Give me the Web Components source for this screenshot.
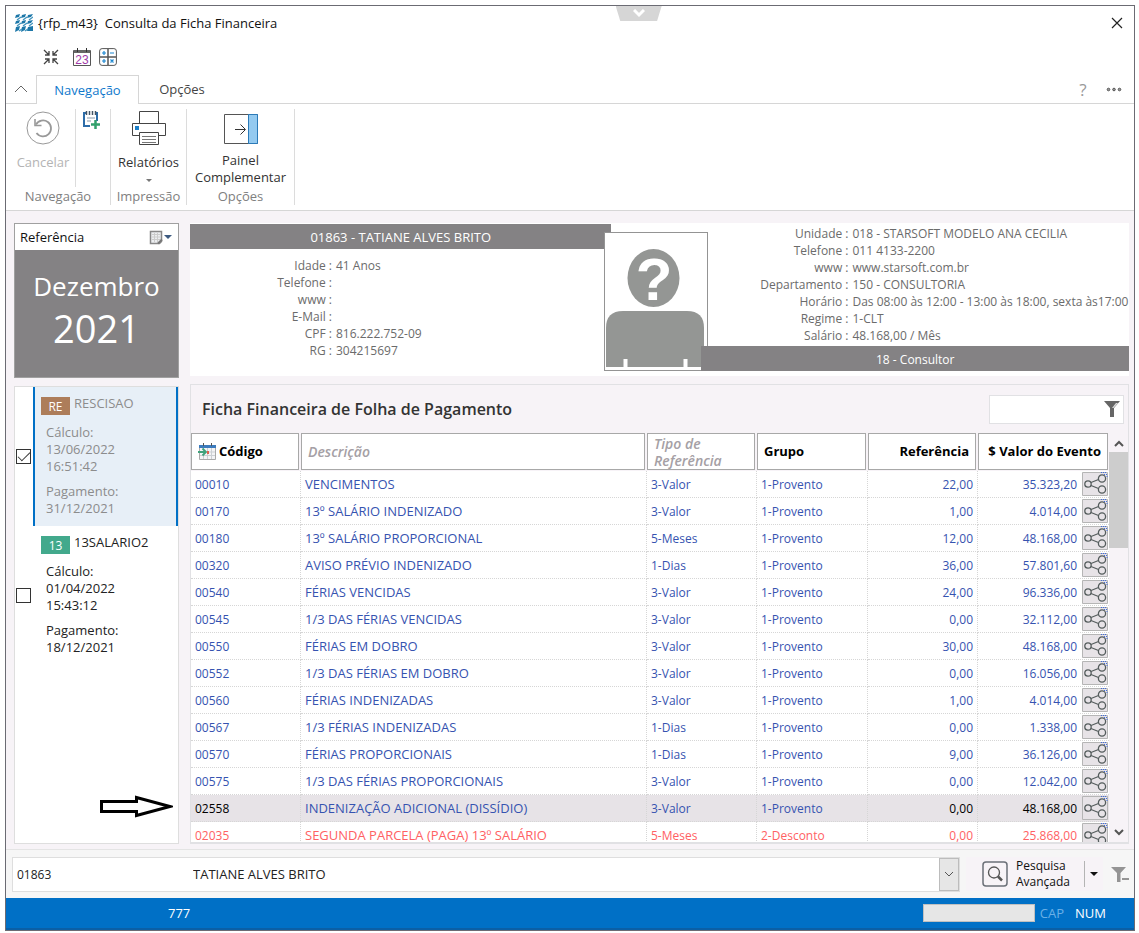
<!DOCTYPE html>
<html lang="pt-BR">
<head>
<meta charset="utf-8">
<title>{rfp_m43} Consulta da Ficha Financeira</title>
<style>
  html, body {
    height: 100%;
  }

  body {
    margin: 0;
    padding: 5px 4px 2px 5px;
    box-sizing: border-box;
    background: #fff;
    font: 13px/17px "Open Sans", "Noto Sans", sans-serif;
    color: #222;
  }
</style>
</head>
<body>
<ficha-window>
  <title-bar slot="top">{rfp_m43}&nbsp; Consulta da Ficha Financeira</title-bar>
  <quick-bar slot="top"></quick-bar>
  <ribbon-tabs slot="top"></ribbon-tabs>
  <ribbon-bar slot="top"></ribbon-bar>
  <reference-card slot="side" month="Dezembro" year="2021">Referência</reference-card>
  <calc-list slot="side">
    <calc-item code="RE" color="#ad7d5a" name="RESCISAO" date="13/06/2022" time="16:51:42" payment="31/12/2021" selected></calc-item>
    <calc-item code="13" color="#42a98c" name="13SALARIO2" date="01/04/2022" time="15:43:12" payment="18/12/2021"></calc-item>
  </calc-list>
  <person-panel></person-panel>
  <event-grid></event-grid>
  <search-footer slot="bottom"></search-footer>
  <status-bar slot="bottom">777</status-bar>
</ficha-window>

<script>
const icons = {
  logo: [18, 18, `<g fill="#1c77a8"><path d="M1 1l4-1-1 3-4 1zM7 1l4-1-1 3-4 1zM13 1l5-1-2 3-4 1zM1 7l4-1-1 3-4 1zM7 7l4-1-1 3-4 1zM13 7l5-1-2 3-4 1zM1 13l4-1-1 4-4 2zM7 13l4-1-1 4-4 2zM13 13l5-1v5h-6z"/></g><path d="M2 6l4-3M8 6l4-3M14 6l4-3M2 12l4-3M8 12l4-3M14 12l4-3M4 17l3-2M10 17l3-2" stroke="#3f93bd" stroke-width="1.300"/>`],
  close: [12, 12, `<path d="M1 1l10 10M11 1L1 11" stroke="#222" fill="none" stroke-width="1.2"/>`],
  collapse: [16, 16, `<g stroke="#444" stroke-width="1.3" fill="none"><path d="M1 1l5 5M6 2v4H2M15 1l-5 5M10 2v4h4M1 15l5-5M2 10h4v4M15 15l-5-5M14 10h-4v4"/></g>`],
  calendar: [18, 18, `<path d="M.5 2.500h17v15H.5z" fill="#fff" stroke="#555"/><path d="M1 2h16v3H1z" fill="#666"/><path d="M4.500 0v4M13.500 0v4" stroke="#333"/><text x="9" y="15.500" text-anchor="middle" font-family="Liberation Sans, sans-serif" font-size="12" fill="#a03aa8">23</text>`],
  calculator: [18, 18, `<rect x=".6" y=".6" width="16.800" height="16.800" rx="2.500" fill="#fff" stroke="#555"/><path d="M9 1v16M1 9h16" stroke="#555" stroke-width="1.500"/><path d="M3 5h4M5 3v4M11 5h4M3 13h4M5 11v4M11.500 11.500l3 3M14.500 11.500l-3 3" stroke="#1a86d0" stroke-width="1.200"/>`],
  chevronUp: [14, 8, `<path d="M1 7l6-6 6 6" fill="none" stroke="#666"/>`],
  dots: [16, 5, `<g fill="#999" stroke="#555"><circle cx="2.500" cy="2.500" r="1.300"/><circle cx="8" cy="2.500" r="1.300"/><circle cx="13.500" cy="2.500" r="1.300"/></g>`],
  undo: [34, 34, `<g fill="none" stroke="#999"><circle cx="17" cy="17" r="16"/><path d="M10 13.500a8 8 0 1 1 .500 8.500" stroke-width="1.800"/><path d="M9 8v6.500h6.500" stroke-width="1.600"/></g>`],
  addNote: [18, 18, `<path d="M4 2H2v13h6M15 1v9" fill="none" stroke="#2d6ca8" stroke-width="2"/><path d="M4.500 0v4M7.500 0v4M10.500 0v4M13.500 0v4" stroke="#456" stroke-width="1.500"/><path d="M5 7h8M5 10h4" stroke="#89a"/><path d="M13.500 9v9M9 13.500h9" stroke="#32a06c" stroke-width="2.500"/>`],
  printer: [34, 34, `<g fill="#fff" stroke="#444"><path d="M7.500.5h19v13h-19z"/><path d="M.5 12.500h33v12H.5z"/><path d="M7.500 21.500h19v12h-19z"/><path d="M10 25.500h14M10 28.500h14M10 31.500h14" stroke="#777"/></g><path d="M3 15h4v4H3z" fill="#1a7fc8"/>`],
  panel: [34, 30, `<path d="M.5.5h33v29H.5z" fill="#fff" stroke="#555"/><path d="M24.500.5h9v29h-9z" fill="#94caf0" stroke="#2b7ab8"/><path d="M11 15.500h10M16.500 10.500l5 5-5 5" fill="none" stroke="#333"/>`],
  note: [14, 15, `<path d="M1.500 1.500h11v10l-2 2h-9z" fill="#eceef0" stroke="#888" stroke-width="1.500"/><path d="M3 4.500h8M3 7h8M3 9.500h8M5.500 3v9M8.500 3v9" stroke="#ccc"/><path d="M9 13.500l4-4" stroke="#777" stroke-width="2"/>`],
  avatar: [102, 137, `<g fill="#949694"><ellipse cx="48.500" cy="45" rx="26" ry="29"/><path d="M1 134V95q0-17 17-17h64q17 0 17 17v39z"/></g><path d="M20.500 126v8M80.500 126v8" stroke="#fff" stroke-width="4"/><text x="49" y="67" text-anchor="middle" font-family="Liberation Sans, sans-serif" font-weight="bold" font-size="60" fill="#fff">?</text>`],
  funnel: [18, 18, `<path d="M1 1h16l-6 7v9H7V8z" fill="#666"/><path d="M10.500 8l4.500-5h-2l-4 5" fill="#ddd"/>`],
  sheet: [18, 17, `<path d="M1.500 2.500h16v14h-16z" fill="#f4f4f6" stroke="#aaa"/><path d="M1 2h17v3H1z" fill="#3c7bbd"/><path d="M5.500 5v11M9.500 5v11M13.500 5v11M2 9h15M2 12.500h15" stroke="#ccd0d4"/><path d="M0 9h7M4.500 5.500L8 9l-3.500 3.500" fill="none" stroke="#3fa27c" stroke-width="1.800"/><path d="M9 8h2v3H9z" fill="#e06050"/><path d="M5.500 0v3M13.500 0v3" stroke="#555"/>`],
  share: [26, 24, `<path d="M.5.500h25v23H.5z" fill="#e7e3e7" stroke="#b5b5b5"/><g fill="none" stroke="#555d5d" stroke-width="1.300"><circle cx="6" cy="12" r="3.200"/><circle cx="20" cy="6.500" r="3.600"/><circle cx="20" cy="17.500" r="3.600"/><path d="M9 10.500l7.500-3M9 13.500l7.500 3"/></g><path d="M19 .5h6M22 2.500h3M24.500 4.500h1" stroke="#3d6be0" stroke-dasharray="1 1"/>`],
  up: [10, 7, `<path d="M1 6l4-4 4 4" fill="none" stroke="#555" stroke-width="2"/>`],
  down: [10, 7, `<path d="M1 1l4 4 4-4" fill="none" stroke="#555" stroke-width="2"/>`],
  thinDown: [10, 6, `<path d="M1 1l4 4 4-4" fill="none" stroke="#555"/>`],
  whiteDown: [12, 9, `<path d="M1 1l5 5 5-5" fill="none" stroke="#fff" stroke-width="3"/>`],
  search: [26, 26, `<rect x="1" y="1" width="24" height="24" rx="3" fill="none" stroke="#6b7078" stroke-width="1.500"/><circle cx="12" cy="11.500" r="5.500" fill="none" stroke="#555" stroke-width="1.300"/><path d="M16 15.500l4 4" stroke="#555" stroke-width="2.500"/>`],
  clearFilter: [19, 16, `<path d="M1 1h15l-5.500 6v9H7V7z" fill="#949494"/><path d="M12 13h7" stroke="#949494" stroke-width="2"/>`],
  caret: [8, 4, `<path d="M0 0h8L4 4z" fill="currentColor"/>`],
  smallCaret: [6, 3, `<path d="M0 0h6L3 3z" fill="currentColor"/>`],
  arrow: [74, 24, `<path d="M2.500 6.500h35v-4L71 11.500l-33.500 9v-4h-35z" fill="#fff" stroke="#000" stroke-width="3"/>`]
};

class UiIcon extends HTMLElement {
  constructor() {
    super();
    this.attachShadow({mode: 'open'});
  }

  connectedCallback() {
    const [w, h, body] = icons[this.getAttribute('name')];
    this.shadowRoot.innerHTML = `
      <style>
        :host { display: inline-block; flex: none; width: ${w}px; height: ${h}px; }
        svg { display: block; }
      </style>
      <svg width="${w}" height="${h}" viewBox="0 0 ${w} ${h}" aria-hidden="true">${body}</svg>`;
  }
}

customElements.define('ui-icon', UiIcon);

const base = `
  *, :host { box-sizing: border-box; }
  button, input, select { font: inherit; color: inherit; margin: 0; padding: 0; border: 0; background: none; border-radius: 0; }
`;

// Registers an element whose shadow root is built from a style and a markup function
function define(name, style, markup) {
  customElements.define(name, class extends HTMLElement {
    constructor() {
      super();
      this.attachShadow({mode: 'open'});
    }

    connectedCallback() {
      this.shadowRoot.innerHTML = `<style>${base}${style}</style>${markup(this)}`;
    }
  });
}

define('ficha-window', `
  :host {
    display: flex;
    flex-direction: column;
    height: 100%;
    border: 1px solid #6b6b73;
    background: #fff;
  }
  main {
    flex: 1;
    min-height: 0;
    display: grid;
    grid-template-columns: 165px minmax(0, 1fr);
    gap: 11px;
    padding: 12px 5px 5px 8px;
    background: #f7f3f7;
    border-top: 1px solid #d6d6d6;
  }
  aside, section {
    display: flex;
    flex-direction: column;
    gap: 8px;
    min-width: 0;
    min-height: 0;
  }
`, () => `
  <slot name="top"></slot>
  <main>
    <aside><slot name="side"></slot></aside>
    <section><slot></slot></section>
  </main>
  <slot name="bottom"></slot>
`);

define('title-bar', `
  :host {
    display: flex;
    align-items: center;
    gap: 5px;
    height: 34px;
    padding: 0 11px 0 9px;
    position: relative;
  }
  h1 { flex: 1; margin: 0; font: inherit; color: #111; }
  .pull {
    position: absolute;
    top: 0;
    left: 56%;
    width: 46px;
    height: 15px;
    margin-left: -22px;
    background: #d6d6d6;
    clip-path: polygon(0 0, 100% 0, 90% 100%, 10% 100%);
  }
  button { display: flex; align-items: center; justify-content: center; }
`, () => `
  <ui-icon name="logo"></ui-icon>
  <h1><slot></slot></h1>
  <button class="pull" aria-label="Expandir"><ui-icon name="whiteDown"></ui-icon></button>
  <button aria-label="Fechar"><ui-icon name="close"></ui-icon></button>
`);

define('quick-bar', `
  :host { display: flex; align-items: center; gap: 8px; height: 35px; padding: 0 37px 2px; }
  button { display: flex; }
  .fold { margin-right: 6px; }
`, () => `
  <button class="fold" aria-label="Recolher"><ui-icon name="collapse"></ui-icon></button>
  <button aria-label="Calendário"><ui-icon name="calendar"></ui-icon></button>
  <button aria-label="Calculadora"><ui-icon name="calculator"></ui-icon></button>
`);

define('ribbon-tabs', `
  :host {
    display: flex;
    align-items: stretch;
    height: 29px;
    padding-right: 12px;
    border-bottom: 1px solid #d6d6d6;
  }
  button { display: flex; align-items: center; justify-content: center; }
  .fold { width: 30px; }
  .tab { width: 86px; color: #444; }
  .active {
    width: 103px;
    margin-bottom: -1px;
    border: 1px solid #d6d6d6;
    border-bottom: 0;
    background: #fff;
    color: #0f78cc;
  }
  .help { margin: 0 9px 0 auto; width: 28px; font-size: 17px; color: #999; }
`, () => `
  <button class="fold" aria-label="Ocultar faixa"><ui-icon name="chevronUp"></ui-icon></button>
  <button class="tab active">Navegação</button>
  <button class="tab">Opções</button>
  <button class="help">?</button>
  <button aria-label="Mais"><ui-icon name="dots"></ui-icon></button>
`);

define('ribbon-group', `
  :host {
    display: flex;
    flex-direction: column;
    height: 96px;
    border-right: 1px solid #dcdcdc;
  }
  .items { flex: 1; display: flex; justify-content: center; align-items: flex-start; }
  .label { line-height: 18px; text-align: center; color: #808080; }
`, el => `
  <div class="items"><slot></slot></div>
  <div class="label">${el.getAttribute('label')}</div>
`);

define('ribbon-bar', `
  :host { display: flex; padding: 5px 0; }
  ribbon-group:nth-of-type(1) { width: 105px; }
  ribbon-group:nth-of-type(2) { width: 76px; }
  ribbon-group:nth-of-type(3) { width: 108px; }
  button {
    display: flex;
    flex-direction: column;
    align-items: center;
    padding-top: 2px;
    line-height: 17px;
    color: #333;
  }
  .large ui-icon { margin-bottom: 9px; }
  .wide { width: 70px; height: 78px; padding-left: 5px; border-right: 1px solid #dcdcdc; }
  .small { width: 34px; padding: 2px 5px 0 0; }
  .off { color: #b4b4b4; }
  .large .more { margin: 8px 0 0; color: #777; }
  .panel { padding-top: 5px; }
  .panel ui-icon { margin-bottom: 8px; }
`, () => `
  <ribbon-group label="Navegação">
    <button class="large wide off"><ui-icon name="undo"></ui-icon>Cancelar</button>
    <button class="small" aria-label="Adicionar anotação"><ui-icon name="addNote"></ui-icon></button>
  </ribbon-group>
  <ribbon-group label="Impressão">
    <button class="large"><ui-icon name="printer"></ui-icon>Relatórios<ui-icon class="more" name="smallCaret"></ui-icon></button>
  </ribbon-group>
  <ribbon-group label="Opções">
    <button class="large panel"><ui-icon name="panel"></ui-icon>Painel<br>Complementar</button>
  </ribbon-group>
`);

define('reference-card', `
  :host { display: block; border: 1px solid #a0a0a0; background: #848284; color: #fff; }
  header {
    display: flex;
    align-items: center;
    gap: 2px;
    height: 26px;
    padding: 0 6px 0 5px;
    background: #fff;
    color: #111;
  }
  header span { flex: 1; }
  button { display: flex; align-items: center; gap: 1px; color: #3d5a80; }
  .period { height: 127px; padding-top: 19px; text-align: center; }
  .month { font-size: 26px; line-height: 34px; }
  .year { font-size: 38px; line-height: 50px; }
`, el => `
  <header>
    <span><slot></slot></span>
    <button aria-label="Escolher referência"><ui-icon name="note"></ui-icon><ui-icon name="caret"></ui-icon></button>
  </header>
  <div class="period">
    <div class="month">${el.getAttribute('month')}</div>
    <div class="year">${el.getAttribute('year')}</div>
  </div>
`);

define('calc-list', `
  :host {
    flex: 1;
    display: block;
    min-height: 0;
    position: relative;
    border: 1px solid #dedede;
    background: #fff;
  }
  .pointer { position: absolute; right: 5px; bottom: 24px; }
`, () => `
  <slot></slot>
  <ui-icon class="pointer" name="arrow"></ui-icon>
`);

define('calc-item', `
  :host { display: block; }
  label { display: grid; grid-template-columns: 18px 1fr; height: 139px; color: #222; }
  input {
    appearance: none;
    align-self: center;
    margin-left: 1px;
    width: 15px;
    height: 15px;
    border: 1px solid #333;
    background: #fff;
  }
  input:checked::before {
    content: "";
    display: block;
    width: 11px;
    height: 5px;
    margin: 2px 1px;
    border: solid #333;
    border-width: 0 0 1px 1px;
    transform: rotate(-45deg);
  }
  .card { padding: 8px 6px 0; border: solid transparent; border-width: 0 2px; }
  :host([selected]) .card { border-color: #0070c6; background: #e7eff7; color: #8c8c8c; }
  .head { display: flex; gap: 4px; margin-bottom: 9px; }
  .code { width: 29px; height: 18px; margin-top: 2px; line-height: 20px; text-align: center; font-size: 12px; color: #fff; }
  p { margin: 0 0 8px 5px; }
`, el => {
  const get = attr => el.getAttribute(attr);
  return `
    <label>
      <input type="checkbox" ${el.hasAttribute('selected') ? 'checked' : ''}>
      <span class="card">
        <div class="head"><span class="code" style="background: ${get('color')}">${get('code')}</span>${get('name')}</div>
        <p>Cálculo:<br>${get('date')}<br>${get('time')}</p>
        <p>Pagamento:<br>${get('payment')}</p>
      </span>
    </label>`;
});

define('data-list', `
  :host {
    display: grid;
    grid-template-columns: var(--label) 1fr;
    grid-auto-rows: 17px;
    column-gap: 4px;
    color: #6b6b6b;
    font-size: 12px;
  }
  dl { display: contents; }
  dt { text-align: right; white-space: nowrap; }
  dd { margin: 0; white-space: nowrap; }
`, el => `
  <dl>${el.textContent.trim().split('\n').map(line => {
    const [label, value] = line.split('|');
    return `<dt>${label.trim()} :</dt><dd>${value.trim()}</dd>`;
  }).join('')}</dl>
`);

define('person-panel', `
  :host {
    display: grid;
    grid-template-columns: minmax(0, 414fr) 104px minmax(0, 420fr);
    height: 153px;
    background: #fff;
  }
  .bar {
    height: 25px;
    background: #848284;
    color: #fff;
    line-height: 27px;
    text-align: center;
    font-size: 12px;
  }
  .name { margin: 1px -7px 0 0; font-size: 13px; }
  .left data-list { --label: 142px; margin-top: 8px; }
  .photo { position: relative; margin-top: 9px; height: 139px; border: 1px solid #949494; background: #fff; }
  .right { position: relative; display: flex; flex-direction: column; }
  .right data-list { --label: 140px; margin-top: 2px; flex: 1; }
  .job { margin: 0 0 5px -7px; }
`, () => `
  <div class="left">
    <div class="bar name">01863 - TATIANE ALVES BRITO</div>
    <data-list>
      Idade|41 Anos
      Telefone|
      www|
      E-Mail|
      CPF|816.222.752-09
      RG|304215697
    </data-list>
  </div>
  <div class="photo"><ui-icon name="avatar"></ui-icon></div>
  <div class="right">
    <data-list>
      Unidade|018 - STARSOFT MODELO ANA CECILIA
      Telefone|011 4133-2200
      www|www.starsoft.com.br
      Departamento|150 - CONSULTORIA
      Horário|Das 08:00 às 12:00 - 13:00 às 18:00, sexta às17:00
      Regime|1-CLT
      Salário|48.168,00 / Mês
    </data-list>
    <div class="bar job">18 - Consultor</div>
  </div>
`);

const events = [
  ['00010', 'VENCIMENTOS', '3-Valor', '1-Provento', '22,00', '35.323,20'],
  ['00170', '13º SALÁRIO INDENIZADO', '3-Valor', '1-Provento', '1,00', '4.014,00'],
  ['00180', '13º SALÁRIO PROPORCIONAL', '5-Meses', '1-Provento', '12,00', '48.168,00'],
  ['00320', 'AVISO PRÉVIO INDENIZADO', '1-Dias', '1-Provento', '36,00', '57.801,60'],
  ['00540', 'FÉRIAS VENCIDAS', '3-Valor', '1-Provento', '24,00', '96.336,00'],
  ['00545', '1/3 DAS FÉRIAS VENCIDAS', '3-Valor', '1-Provento', '0,00', '32.112,00'],
  ['00550', 'FÉRIAS EM DOBRO', '3-Valor', '1-Provento', '30,00', '48.168,00'],
  ['00552', '1/3 DAS FÉRIAS EM DOBRO', '3-Valor', '1-Provento', '0,00', '16.056,00'],
  ['00560', 'FÉRIAS INDENIZADAS', '3-Valor', '1-Provento', '1,00', '4.014,00'],
  ['00567', '1/3 FÉRIAS INDENIZADAS', '1-Dias', '1-Provento', '0,00', '1.338,00'],
  ['00570', 'FÉRIAS PROPORCIONAIS', '1-Dias', '1-Provento', '9,00', '36.126,00'],
  ['00575', '1/3 DAS FÉRIAS PROPORCIONAIS', '3-Valor', '1-Provento', '0,00', '12.042,00'],
  ['02558', 'INDENIZAÇÃO ADICIONAL (DISSÍDIO)', '3-Valor', '1-Provento', '0,00', '48.168,00', 'current'],
  ['02035', 'SEGUNDA PARCELA (PAGA) 13º SALÁRIO', '5-Meses', '2-Desconto', '0,00', '25.868,00', 'debit']
];

define('event-grid', `
  :host {
    flex: 1;
    min-height: 0;
    display: flex;
    flex-direction: column;
    border: 1px solid #e1e1e4;
    border-bottom-width: 2px;
  }
  header {
    display: flex;
    align-items: center;
    justify-content: space-between;
    height: 48px;
    padding: 0 4px 0 11px;
  }
  h2 { margin: 0; font-size: 16px; line-height: 20px; font-weight: 600; color: #333; }
  .filter {
    display: flex;
    align-items: center;
    width: 135px;
    height: 29px;
    padding-right: 2px;
    border: 1px solid #e1e1e4;
    background: #fff;
  }
  .filter input { flex: 1; min-width: 0; height: 100%; }
  .body { flex: 1; min-height: 0; display: flex; }
  .rows { flex: 1; min-width: 0; overflow: hidden; }
  table { width: 100%; table-layout: fixed; border-collapse: separate; border-spacing: 0; font-size: 12px; }
  th { padding: 0 2px 1px 0; text-align: left; line-height: 17px; font-size: 13px; }
  th div {
    display: flex;
    align-items: center;
    gap: 3px;
    height: 37px;
    padding: 0 6px;
    border: 1px solid #a8a8a8;
    background: #fff;
    color: #000;
  }
  th:last-child { padding-right: 1px; }
  th.soft div { font-size: 14px; font-style: italic; font-weight: 600; color: #a5a0a5; }
  th.num div { justify-content: flex-end; }
  td {
    height: 27px;
    padding: 0 4px;
    border: 0 dotted #d6d6d6;
    border-width: 0 1px 1px 0;
    background: #fff;
    color: #3653b0;
    white-space: nowrap;
  }
  td.text { font-size: 13px; }
  td.num { text-align: right; }
  td.value { padding: 0 1px 0 0; border-right: 0; }
  .value div { display: flex; align-items: center; justify-content: flex-end; gap: 5px; }
  .value button { display: flex; }
  .current td { background: #e7e3e7; }
  .current td:first-child, .current .num, .current .value { color: #000; }
  .debit td { color: #ff6163; }
  .scroll {
    width: 19px;
    display: flex;
    flex-direction: column;
    align-items: center;
    padding: 7px 0 6px;
  }
  .thumb { width: 19px; height: 96px; margin: 5px 0 auto; background: #cdcdcd; }
`, () => `
  <header>
    <h2>Ficha Financeira de Folha de Pagamento</h2>
    <div class="filter"><input type="text" aria-label="Filtrar eventos"><ui-icon name="funnel"></ui-icon></div>
  </header>
  <div class="body">
    <div class="rows">
      <table>
        <colgroup>
          <col style="width: 110px"><col><col style="width: 110px">
          <col style="width: 111px"><col style="width: 110px"><col style="width: 131px">
        </colgroup>
        <thead>
          <tr>
            <th><div><ui-icon name="sheet"></ui-icon>Código</div></th>
            <th class="soft"><div>Descrição</div></th>
            <th class="soft"><div>Tipo de<br>Referência</div></th>
            <th><div>Grupo</div></th>
            <th class="num"><div>Referência</div></th>
            <th class="num"><div>$ Valor do Evento</div></th>
          </tr>
        </thead>
        <tbody>
          ${events.map(([code, text, type, group, ref, value, state = '']) => `
            <tr class="${state}">
              <td>${code}</td>
              <td class="text">${text}</td>
              <td>${type}</td>
              <td>${group}</td>
              <td class="num">${ref}</td>
              <td class="value"><div>${value}<button aria-label="Detalhar ${code}"><ui-icon name="share"></ui-icon></button></div></td>
            </tr>`).join('')}
        </tbody>
      </table>
    </div>
    <div class="scroll">
      <ui-icon name="up"></ui-icon>
      <div class="thumb"></div>
      <ui-icon name="down"></ui-icon>
    </div>
  </div>
`);

define('search-footer', `
  :host {
    display: flex;
    align-items: center;
    height: 49px;
    padding: 0 5px 0 6px;
    border-top: 1px solid #e4e4e4;
    background: #f6f6f6;
  }
  .field {
    flex: 1;
    display: grid;
    grid-template-columns: 176px 1fr 20px;
    height: 35px;
    border: 1px solid #dedede;
    background: #fff;
    color: #222;
  }
  .field input { min-width: 0; padding-left: 4px; font-size: 12px; }
  select { appearance: none; grid-area: 1 / 2 / 2 / 4; padding-left: 4px; }
  .open {
    grid-area: 1 / 3;
    display: flex;
    align-items: center;
    justify-content: center;
    border: 1px solid #bcbcbc;
    background: #e6e6e6;
    pointer-events: none;
  }
  .advanced {
    display: flex;
    align-items: center;
    height: 34px;
    margin: 0 7px 0 6px;
    padding: 0 5px 0 16px;
    background: #f7f3f7;
    color: #111;
  }
  button { display: flex; align-items: center; gap: 8px; line-height: 16px; text-align: left; font-size: 12px; }
  .more { height: 26px; margin-left: 14px; padding-left: 5px; border-left: 1px solid #b4b4b4; }
`, () => `
  <div class="field">
    <input type="text" value="01863" aria-label="Código">
    <select aria-label="Funcionário"><option>TATIANE ALVES BRITO</option></select>
    <span class="open"><ui-icon name="thinDown"></ui-icon></span>
  </div>
  <div class="advanced">
    <button><ui-icon name="search"></ui-icon><span>Pesquisa<br>Avançada</span></button>
    <button class="more" aria-label="Mais opções de pesquisa"><ui-icon name="caret"></ui-icon></button>
  </div>
  <button aria-label="Limpar filtro"><ui-icon name="clearFilter"></ui-icon></button>
`);

define('status-bar', `
  :host {
    display: flex;
    align-items: center;
    height: 32px;
    padding: 0 28px 0 162px;
    border-bottom: 2px solid #0a5fa6;
    background: #0070c6;
    color: #fff;
  }
  .progress { width: 112px; height: 18px; margin: 0 5px 0 auto; border: 1px solid #c0c0c0; background: #e6e6e6; }
  .off { margin-right: 11px; color: #6bb0e6; }
`, () => `
  <slot></slot>
  <div class="progress"></div>
  <span class="off">CAP</span>
  <span>NUM</span>
`);
</script>
</body>
</html>
